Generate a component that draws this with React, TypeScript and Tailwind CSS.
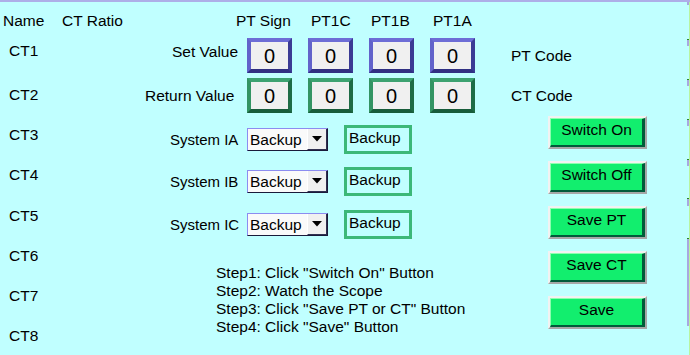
import React from "react";

const setBox =
  "w-[45px] h-[35px] border-4 border-t-[#6d6dd6] border-l-[#6262ca] border-r-[#3b3b94] border-b-[#303082] bg-[#f0f0f0] flex items-center justify-center text-[20px] leading-none";
const retBox =
  "w-[45px] h-[35px] border-4 border-t-[#3da271] border-l-[#339463] border-r-[#1e6c46] border-b-[#185c3b] bg-[#f0f0f0] flex items-center justify-center text-[20px] leading-none";

function Select() {
  return (
    <div className="w-[81px] h-[23px] flex border border-t-[#8c8cf0] border-l-[#8c8cf0] border-r-[#1a1a3a] border-b-[#1a1a3a] bg-[#fafafa]">
      <div className="flex-1 flex items-center pl-[2px] text-[15.5px] leading-none">Backup</div>
      <div className="w-[20px] h-full bg-[#f0f0f0] border-l border-l-[#ffffff] border-r border-b border-r-[#303050] border-b-[#303050] flex items-center justify-center">
        <svg width="10" height="6" viewBox="0 0 10 6">
          <polygon points="0,0 10,0 5,5.5" fill="#000" />
        </svg>
      </div>
    </div>
  );
}

function Output() {
  return (
    <div className="w-[68px] h-[29px] border-[3px] border-[#3cb878] pl-[2px] pt-[1px] text-[15.5px] leading-[17px]">
      Backup
    </div>
  );
}

function Btn({ label }: { label: string }) {
  return (
    <div className="w-[99px] h-[33px] border-2 border-t-[#f2f2f2] border-l-[#f2f2f2] border-r-[#a6a6a6] border-b-[#a6a6a6]">
      <div className="w-full h-full bg-[#12ee6e] border-t border-l border-t-[#8dffb0] border-l-[#8dffb0] border-r-[3px] border-b-2 border-r-[#005a3a] border-b-[#005a3a] text-center pt-[2px] text-[15.5px] leading-[17px] whitespace-nowrap">
        {label}
      </div>
    </div>
  );
}

function SysRow({ label, mt }: { label: string; mt: string }) {
  return (
    <div className={`flex items-center h-[29px] ${mt}`}>
      <div className="ml-[110px] w-[77px] whitespace-nowrap text-[15px]">{label}</div>
      <Select />
      <div className="ml-[16px]">
        <Output />
      </div>
    </div>
  );
}

export default function App() {
  const cts = [
    { n: "CT1", mt: "mt-[13px]" },
    { n: "CT2", mt: "mt-[27px]" },
    { n: "CT3", mt: "mt-[23px]" },
    { n: "CT4", mt: "mt-[23px]" },
    { n: "CT5", mt: "mt-[24px]" },
    { n: "CT6", mt: "mt-[23px]" },
    { n: "CT7", mt: "mt-[23px]" },
    { n: "CT8", mt: "mt-[23px]" },
  ];
  return (
    <div className="w-[690px] h-[355px] bg-[#c0ffff] overflow-hidden flex flex-col font-['Liberation_Sans',Arial,sans-serif] text-[15.5px] leading-[17px] text-black">
      <div className="h-[2px] shrink-0 bg-[#aeaee8]" />
      <div className="flex flex-1">
        {/* Left column */}
        <div className="w-[60px] pt-[10px] flex flex-col">
          <div className="pl-[3px]">Name</div>
          {cts.map((c) => (
            <div key={c.n} className={`pl-[9px] ${c.mt}`}>
              {c.n}
            </div>
          ))}
        </div>

        {/* Middle column */}
        <div className="w-[440px] pt-[10px] flex flex-col">
          <div className="flex h-[17px] whitespace-nowrap">
            <div className="w-[176px] pl-[2px]">CT Ratio</div>
            <div className="w-[75px]">PT Sign</div>
            <div className="w-[60px]">PT1C</div>
            <div className="w-[62px]">PT1B</div>
            <div>PT1A</div>
          </div>

          <div className="flex items-start mt-[9px]">
            <div className="ml-[112px] w-[75px] mt-[5px] whitespace-nowrap">Set Value</div>
            <div className="flex gap-[16px]">
              <div className={setBox}>0</div>
              <div className={setBox}>0</div>
              <div className={setBox}>0</div>
              <div className={setBox}>0</div>
            </div>
          </div>

          <div className="flex items-start mt-[5px]">
            <div className="ml-[85px] w-[102px] mt-[9px] whitespace-nowrap">Return Value</div>
            <div className="flex gap-[16px]">
              <div className={retBox}>0</div>
              <div className={retBox}>0</div>
              <div className={retBox}>0</div>
              <div className={retBox}>0</div>
            </div>
          </div>

          <SysRow label="System IA" mt="mt-[12px]" />
          <SysRow label="System IB" mt="mt-[13px]" />
          <SysRow label="System IC" mt="mt-[14px]" />

          <div className="mt-[25px] ml-[156px] text-[15.5px] leading-[18px] whitespace-nowrap">
            <div>Step1: Click "Switch On" Button</div>
            <div>Step2: Watch the Scope</div>
            <div>Step3: Click "Save PT or CT" Button</div>
            <div>Step4: Click "Save" Button</div>
          </div>
        </div>

        {/* Right column */}
        <div className="w-[187px] pt-[45px] flex flex-col">
          <div className="pl-[11px]">PT Code</div>
          <div className="pl-[11px] mt-[23px]">CT Code</div>
          <div className="ml-[48px] mt-[12px] flex flex-col gap-[12px]">
            <Btn label="Switch On" />
            <Btn label="Switch Off" />
            <Btn label="Save PT" />
            <Btn label="Save CT" />
            <Btn label="Save" />
          </div>
        </div>

        {/* Right edge strip */}
        <div className="w-[3px] flex">
          <div className="w-[2px] flex flex-col">
            <div className="h-[3px] bg-[#a8a8e0]" />
            <div className="mt-[34px] h-[7px] bg-[#a8a8e0] border-t border-t-[#2a8a2a]" />
            <div className="mt-[33px] h-[7px] bg-[#a8a8e0] border-t border-t-[#2a8a2a]" />
            <div className="mt-[33px] h-[7px] bg-[#a8a8e0] border-t border-t-[#2a8a2a]" />
            <div className="mt-[33px] h-[7px] bg-[#a8a8e0] border-t border-t-[#2a8a2a]" />
            <div className="mt-[32px] h-[8px] bg-[#a8a8e0] border-t border-t-[#2a8a2a]" />
            <div className="mt-[32px] h-[88px] bg-[#a8a8e0] border-t border-t-[#2a8a2a]" />
          </div>
          <div className="w-[1px] bg-[#b8f4a0]" />
        </div>
      </div>
    </div>
  );
}
